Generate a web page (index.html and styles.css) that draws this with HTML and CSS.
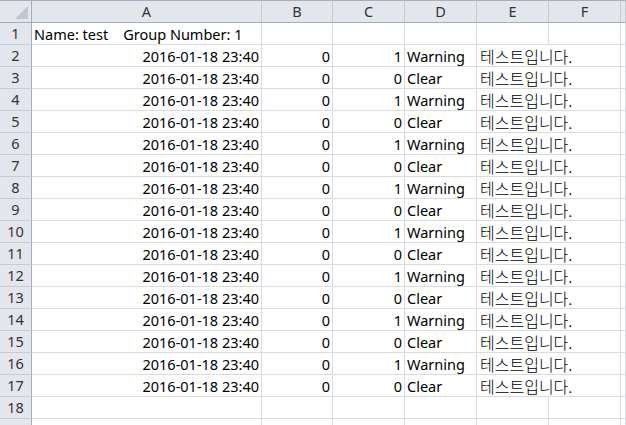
FILE: index.html
```html
<!DOCTYPE html>
<html>
<head>
    <link rel="stylesheet" href="styles.css">
</head>
<body>
    <div class="sheet" id="sheet">
        <div class="cell head corner"><span class="tri"></span></div>
        <div class="cell head col">A</div>
        <div class="cell head col">B</div>
        <div class="cell head col">C</div>
        <div class="cell head col">D</div>
        <div class="cell head col">E</div>
        <div class="cell head col">F</div>
        <div class="cell head col"></div>

        <div class="cell head row">1</div>
        <div class="cell txt">Name: test    Group Number: 1</div>
        <div class="cell"></div>
        <div class="cell"></div>
        <div class="cell"></div>
        <div class="cell"></div>
        <div class="cell"></div>
        <div class="cell"></div>
    </div>

    <script>
        const sheet = document.getElementById('sheet');

        // data rows 2..17, warning / clear alternate
        for (let r = 2; r <= 19; r++) {
            let cells;
            if (r <= 17) {
                const warn = r % 2 === 0;
                cells = [
                    ['num', '2016-01-18 23:40'],
                    ['num', '0'],
                    ['num', warn ? '1' : '0'],
                    ['txt', warn ? 'Warning' : 'Clear'],
                    ['txt spill', '<span class="ko">테스트입니다.</span>'],
                    ['', ''],
                    ['', '']
                ];
            } else {
                cells = [['', ''], ['', ''], ['', ''], ['', ''], ['', ''], ['', ''], ['', '']];
            }
            let html = '<div class="cell head row">' + (r <= 18 ? r : '') + '</div>';
            cells.forEach(function (c) {
                html += '<div class="cell ' + c[0] + '">' + c[1] + '</div>';
            });
            sheet.insertAdjacentHTML('beforeend', html);
        }
    </script>
</body>
</html>
```

FILE: styles.css
```css
body {
    margin: 0;
    overflow: hidden;
    background: #fff;
    font-family: "Noto Sans", "Noto Sans CJK KR", sans-serif;
    font-size: 14.5px;
    color: #000;
}

.sheet {
    display: grid;
    grid-template-columns: 32px 230px 71px 72px 72px 72px 72px 5px;
    grid-template-rows: 23px;
    grid-auto-rows: 22px;
    width: 626px;
    overflow: hidden;
}

.cell {
    box-sizing: border-box;
    border-right: 1px solid #d9dbde;
    border-bottom: 1px solid #d9dbde;
    line-height: 22px;
    white-space: pre;
    position: relative;
}

.head {
    background-color: #e3e7ed;
    color: #333;
    text-align: center;
    border-color: #c6ccd4;
    line-height: 21px;
}

.head.col {
    border-top: 1px solid #a7afba;
    border-bottom-color: #a3acb8;
}

.head.row {
    border-right-color: #a3acb8;
}

.corner {
    border-top: 1px solid #a7afba;
    border-bottom-color: #a3acb8;
    border-right-color: #a3acb8;
}

.corner .tri {
    position: absolute;
    right: 3px;
    bottom: 3px;
    width: 0;
    height: 0;
    border-left: 13px solid transparent;
    border-bottom: 13px solid #c2c7ce;
}

.num {
    text-align: right;
    padding-right: 2px;
}

.txt {
    padding-left: 2px;
}

.spill {
    border-right-color: transparent;
    overflow: visible;
    padding-left: 3px;
}

.ko {
    font-family: "Noto Sans CJK KR", sans-serif;
    font-size: 16px;
    font-weight: 300;
}
```
